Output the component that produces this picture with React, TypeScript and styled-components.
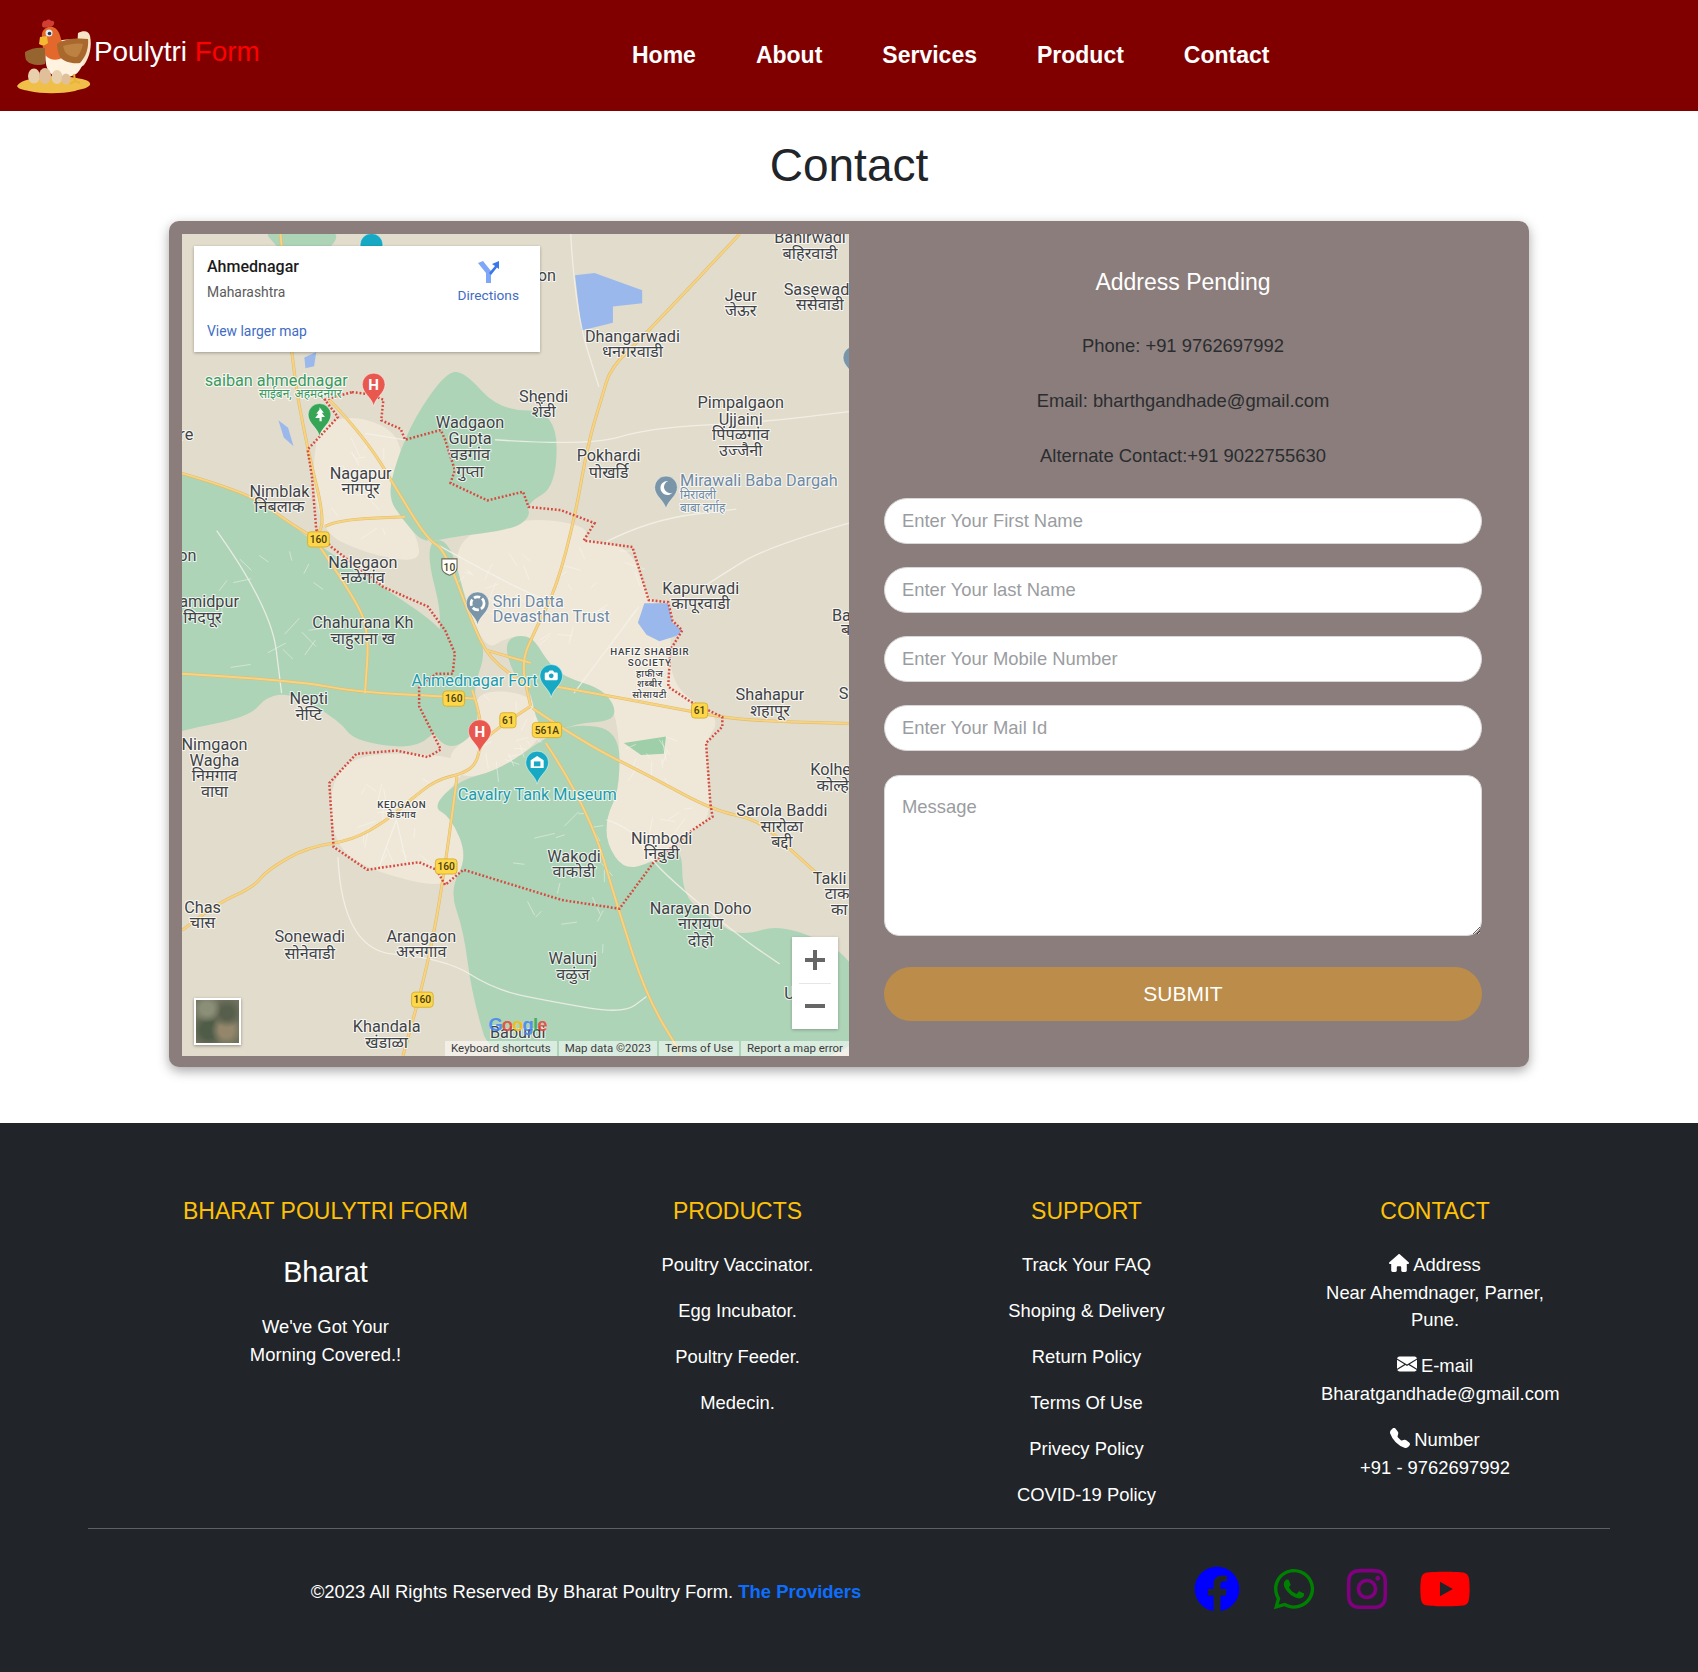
import React from "react";
import styled, { createGlobalStyle } from "styled-components";
import { FaFacebook, FaWhatsapp, FaInstagram, FaYoutube } from "react-icons/fa";
import { FaHouse } from "react-icons/fa6";
import { BsTelephoneFill, BsEnvelopeFill } from "react-icons/bs";

const Global = createGlobalStyle`
  html, body { margin: 0; padding: 0; background: #fff; }
  body { font-family: "Liberation Sans", Arial, sans-serif; color: #212529; }
  * { box-sizing: border-box; }
`;

const Page = styled.div`width: 1698px; height: 1672px; overflow: hidden;`;

const Header = styled.header`
  height: 110.5px; background: #800000; display: flex; align-items: center;
`;
const Brand = styled.div`
  width: 632px; display: flex; align-items: center; padding-left: 16px;
  font-size: 27.9px; color: #fff;
`;
const BrandAccent = styled.span`color: #ff0000;`;
const BrandText = styled.span`margin: 0 0 6px 0;`;
const Nav = styled.nav`display: flex; gap: 60px;`;
const NavLink = styled.a`font-size: 23px; font-weight: 700; color: #fff; line-height: 1;`;

const Title = styled.h1`
  margin: 26.5px 0 28px; text-align: center; font-size: 46px; font-weight: 400; line-height: 56px; color: #212529;
`;

const Card = styled.section`
  width: 1360px; height: 846px; margin: 0 0 56px 169px; padding: 13px 12px 11px 13px; display: flex;
  background: #8b7d7b; border-radius: 10px; box-shadow: 0 4px 12px rgba(0,0,0,.35);
`;
const MapFrame = styled.div`position: relative; width: 667px; height: 822px; flex: none; overflow: hidden; background: #e2dccc;`;
const MapSvg = styled.svg`display: block; width: 100%; height: 100%;`;

const mapFont = `font-family: Roboto, "Noto Sans", sans-serif;`;
const InfoCard = styled.div`
  ${mapFont} position: absolute; left: 12px; top: 12px; width: 346px; height: 106px; background: #fff;
  box-shadow: 0 1px 3px rgba(0,0,0,.3); padding: 11px 13px 12px; display: grid;
  grid-template-columns: 1fr auto; grid-template-rows: auto auto 1fr;
`;
const PlaceName = styled.div`font-size: 16px; font-weight: 500; color: #1c1c1c; line-height: 20px;`;
const PlaceRegion = styled.div`font-size: 13.9px; color: #5b5b5b; line-height: 20px; margin-top: 4px; grid-column: 1;`;
const LargerLink = styled.a`font-size: 13.9px; color: #3f6cc4; align-self: end; grid-column: 1 / 3; line-height: 18px;`;
const Directions = styled.div`
  grid-column: 2; grid-row: 1 / 3; font-size: 13.7px; color: #3f6cc4; text-align: center; padding: 3px 8px 0 0;
  display: flex; flex-direction: column; align-items: center; gap: 4px;
`;
const ZoomBox = styled.div`
  position: absolute; right: 11px; bottom: 27px; width: 46px; height: 92px; background: #fff;
  box-shadow: 0 1px 3px rgba(0,0,0,.25); display: grid; grid-template-rows: 1fr 1px 1fr; justify-items: center; align-items: center;
`;
const ZoomDivider = styled.div`width: 32px; height: 1px; background: #e6e6e6;`;
const Thumb = styled.div`
  position: absolute; left: 12px; bottom: 11px; width: 47px; height: 47px; border: 2px solid #fff;
  box-shadow: 0 1px 3px rgba(0,0,0,.35);
  background:
    radial-gradient(circle at 25% 20%, #8b8f78 0 12%, transparent 30%),
    radial-gradient(circle at 72% 30%, #575f4c 0 14%, transparent 34%),
    radial-gradient(circle at 70% 70%, #93866b 0 16%, transparent 36%),
    radial-gradient(circle at 30% 70%, #4f5c48 0 18%, transparent 40%),
    #6f715c;
`;
const Attribution = styled.div`
  ${mapFont} position: absolute; right: 0; bottom: 0; height: 15px; display: flex; gap: 2px; font-size: 11.5px; line-height: 15px; color: #3c3c3c;
`;
const AttrItem = styled.span`padding: 0 6px; background: rgba(255,255,255,.55); white-space: nowrap;`;

const FormCol = styled.div`flex: 1; padding: 34px 35px 0; text-align: center;`;
const FormHeading = styled.h3`margin: 0 0 36px; font-size: 23px; line-height: 28px; font-weight: 400; color: #fff;`;
const InfoLine = styled.p`margin: 0 0 27.6px; font-size: 18.4px; line-height: 27.6px; color: #2a2d30;`;
const baseField = `
  display: block; width: 598px; background: #fff; border: 1px solid #d8d8d8; outline: none; color: #212529;
  font-family: "Liberation Sans", Arial, sans-serif; font-size: 18.4px;
  &::placeholder { color: #9a9d9f; opacity: 1; }
`;
const Field = styled.input`${baseField} height: 46px; border-radius: 23px; padding: 0 17px; margin-bottom: 23.3px;`;
const Message = styled.textarea`${baseField} height: 161px; border-radius: 15px; padding: 20px 17px; margin-bottom: 31px;`;
const Submit = styled.button`
  display: block; width: 598px; height: 54px; border: 0; border-radius: 27px; background: #bc8c4a; color: #fff;
  font-family: "Liberation Sans", Arial, sans-serif; font-size: 21px; text-transform: uppercase;
`;

const Footer = styled.footer`background: #212529; height: 549px; padding: 74px 88px 0 88px; color: #fff;`;
const FooterGrid = styled.div`
  display: grid; grid-template-columns: 475px 349px 349px 348px; height: 332px; border-bottom: 1px solid rgba(255,255,255,.28);
  text-align: center;
`;
const FooterCol = styled.div`display: flex; flex-direction: column; align-items: center;`;
const FooterHead = styled.h5`margin: 0 0 26px; font-size: 23px; line-height: 28px; font-weight: 400; color: #ffc107; text-transform: uppercase;`;
const FooterBrand = styled.h4`margin: 4px 0 24px; font-size: 28.7px; line-height: 34px; font-weight: 400;`;
const FooterItem = styled.p`margin: 0 0 18.5px; font-size: 18.4px; line-height: 27.6px;`;
const ContactBlock = styled.div`width: 228px;`;
const ContactEmail = styled.div`white-space: nowrap; text-align: left;`;
const InlineIcon = styled.span`
  display: inline-block; vertical-align: -2px; margin-right: 4px;
  svg { display: block; width: 20px; height: 20px; }
`;
const BottomRow = styled.div`display: grid; grid-template-columns: 996px 1fr; height: 124px; align-items: center;`;
const Copy = styled.p`margin: 2px 0 0; text-align: center; font-size: 18.45px;`;
const CopyLink = styled.a`color: #0d6efd; font-weight: 700;`;
const Socials = styled.div`display: flex; align-items: center; padding-left: 110px; margin-bottom: 4px;`;
const Social = styled.span<{ $c: string; $h: number; $gap: number }>`
  display: flex; color: ${p => p.$c}; margin-right: ${p => p.$gap}px;
  svg { display: block; height: ${p => p.$h}px; width: auto; }
`;

/* Map drawing */
const round1 = (n: number) => Math.round(n * 10) / 10;
const mid = (a: number[], b: number[]) => `${round1((a[0] + b[0]) / 2)} ${round1((a[1] + b[1]) / 2)}`;
const closedCurve = (a: number[][]) => {
  let d = `M${mid(a[a.length - 1], a[0])}`;
  a.forEach((p, i) => { d += `Q${p[0]} ${p[1]} ${mid(p, a[(i + 1) % a.length])}`; });
  return d + "Z";
};
const openCurve = (a: number[][]) => {
  let d = `M${a[0][0]} ${a[0][1]}`;
  for (let i = 1; i < a.length - 1; i++) d += `Q${a[i][0]} ${a[i][1]} ${mid(a[i], a[i + 1])}`;
  const l = a[a.length - 1];
  return d + `L${l[0]} ${l[1]}`;
};
const poly = (a: number[][]) => "M" + a.map(p => p.join(" ")).join("L");
const toPts = (a: number[][]) => a.map(p => p.join(",")).join(" ");

const greens: number[][][] = [
  [[120,420],[168,437],[230,455],[271,486],[292,502],[354,542],[412,582],[420,610],[403,692],[329,686],[313,665],[270,640],[246,643],[230,662],[168,674],[120,690]],
  [[411,345],[428,342],[461,379],[514,379],[514,449],[486,465],[490,477],[473,489],[415,496],[391,502],[372,480],[358,459],[366,425],[383,385]],
  [[391,502],[415,496],[432,563],[450,600],[436,637],[444,674],[411,696],[387,652],[387,620],[412,582]],
  [[424,720],[461,711],[505,680],[530,668],[572,674],[572,729],[560,754],[560,779],[576,803],[601,797],[630,779],[630,828],[660,850],[683,865],[725,852],[800,890],[800,990],[457,990],[436,920],[428,859],[415,822],[432,791],[416,754],[399,745]],
  [[465,590],[490,585],[505,610],[520,625],[560,637],[572,665],[530,668],[505,680],[494,662],[490,637],[473,622]],
  [[240,210],[320,210],[295,240],[275,250],[258,230]],
];
const urbans: number[][][] = [
  [[288,394],[329,382],[374,403],[366,462],[387,499],[387,520],[337,511],[292,489]],
  [[415,496],[490,477],[543,486],[539,499],[584,505],[597,554],[621,566],[617,634],[667,662],[650,686],[658,754],[638,769],[601,797],[576,803],[560,779],[560,754],[572,729],[572,674],[560,637],[520,625],[505,610],[490,585],[465,590],[450,600],[432,563]],
  [[304,723],[329,696],[403,696],[432,705],[424,720],[399,745],[416,754],[432,791],[415,822],[339,803],[308,779]],
  [[436,637],[494,640],[505,680],[461,711],[424,720],[411,696],[444,674]],
];
const waters: number[][][] = [
  [[531,254],[549,252],[593,268],[593,280],[566,283],[566,298],[537,305]],
  [[595,557],[617,557],[621,575],[630,582],[625,587],[609,592],[597,586],[589,575]],
  [[257,388],[266,395],[271,412],[262,404]],
  [[281,330],[292,325],[290,338],[282,340]],
];
const yellowRoads: number[][][] = [
  [[683,216],[597,308],[564,339],[556,366],[543,409],[531,477],[514,542],[494,582],[481,612],[490,652]],
  [[259,216],[269,335],[284,415],[300,480],[292,496]],
  [[304,369],[337,403],[374,465],[395,498],[411,508],[436,575],[452,609],[490,635]],
  [[168,437],[230,455],[263,480],[292,498]],
  [[300,486],[312,480],[374,477]],
  [[292,500],[325,548],[341,582],[337,640]],
  [[168,622],[271,628],[329,639],[411,643],[438,645]],
  [[490,652],[461,671],[444,686],[440,705],[428,714],[403,720],[378,739],[358,757],[325,776],[284,782],[247,803],[234,819],[201,834],[168,859]],
  [[514,634],[560,642],[634,656],[683,665],[784,668]],
  [[492,654],[539,686],[601,717],[658,748],[700,757],[724,779],[757,809]],
  [[504,686],[543,745],[572,843],[597,920],[630,975]],
  [[422,717],[411,803],[395,892],[372,975]],
  [[448,600],[490,612]],
  [[436,637],[445,665],[443,690]],
];
const whiteRoads: number[][][] = [
  [[337,400],[374,406]],
  [[457,406],[543,412],[600,395],[700,390],[784,380]],
  [[527,216],[531,286],[553,357]],
  [[312,791],[316,877],[411,885],[457,914],[510,925],[576,936],[597,920]],
  [[560,757],[585,765],[601,797],[683,865],[720,890]],
  [[366,757],[350,800]],[[366,757],[375,795]],
  [[784,483],[708,505],[663,533],[640,548]],
  [[395,498],[470,540],[520,560]],
  [[530,640],[590,560]],
  [[200,490],[250,560],[260,640]],
  [[560,500],[600,480],[680,470]],
];
const boundary: number[][] = [
  [325,362],[341,364],[354,369],[352,388],[370,396],[374,406],[407,397],[411,406],[420,434],[416,446],[450,462],[483,454],[488,468],[518,471],[549,483],[539,499],[584,505],[599,554],[617,556],[621,573],[630,582],[619,600],[617,634],[638,648],[667,662],[667,671],[652,686],[656,742],[658,754],[640,766],[603,797],[572,839],[519,831],[428,803],[411,817],[403,803],[387,796],[339,803],[308,782],[304,723],[329,696],[366,693],[395,699],[407,692],[387,652],[387,634],[403,622],[418,622],[420,603],[411,582],[395,560],[354,542],[306,505],[292,489],[288,440],[284,415],[312,385],[300,369],[325,362]
];

/* fine street texture inside the built-up areas */
const streetBoxes = [[300,400,60,95],[505,500,85,90],[445,640,50,65],[335,715,65,75],[585,680,60,80],[425,510,80,60],[470,745,90,130],[200,500,120,130]];
const streets: string[] = [];
let seed = 17;
const rnd = () => { seed = (seed * 9301 + 49297) % 233280; return seed / 233280; };
streetBoxes.forEach(([x, y, w, h]) => {
  for (let i = 0; i < 16; i++) {
    const sx = x + rnd() * w, sy = y + rnd() * h;
    const len = 6 + rnd() * 14, ang = rnd() * Math.PI;
    streets.push(`M${round1(sx)} ${round1(sy)}l${round1(Math.cos(ang) * len)} ${round1(Math.sin(ang) * len)}`);
  }
});

type L = [number, number, string];
const dark: L[] = [
  [748,224,"Bahirwadi"],[748,239,"बहिरवाडी"],[754,272,"Sasewad"],[757,286,"ससेवाडी"],[684,278,"Jeur"],[684,292,"जेऊर"],
  [505,259,"on"],[584,316,"Dhangarwadi"],[584,330,"धनगरवाडी"],[502,371,"Shendi"],[502,385,"शेंडी"],
  [434,395,"Wadgaon"],[434,410,"Gupta"],[434,425,"वडगांव"],[434,440,"गुप्ता"],
  [684,377,"Pimpalgaon"],[684,392,"Ujjaini"],[684,406,"पिंपळगांव"],[684,421,"उज्जैनी"],
  [562,426,"Pokhardi"],[562,441,"पोखर्डि"],[172,406,"re"],[333,442,"Nagapur"],[333,456,"नागपूर"],
  [258,459,"Nimblak"],[258,473,"निंबलाक"],[173,518,"on"],[335,524,"Nalegaon"],[335,538,"नळेगांव"],
  [647,548,"Kapurwadi"],[647,562,"कापूरवाडी"],[193,560,"amidpur"],[187,575,"मिदपूर"],
  [335,580,"Chahurana Kh"],[335,595,"चाहुराना ख"],[777,573,"Ba"],[781,586,"ब"],
  [285,650,"Nepti"],[285,665,"नेप्टि"],[711,646,"Shahapur"],[711,661,"शहापूर"],[779,645,"S"],
  [198,692,"Nimgaon"],[198,707,"Wagha"],[198,721,"निमगाव"],[198,736,"वाघा"],
  [767,716,"Kolhe"],[769,730,"कोल्हे"],[722,753,"Sarola Baddi"],[722,768,"सारोळा"],[722,782,"बद्दी"],
  [611,779,"Nimbodi"],[611,793,"निंबुडी"],[530,796,"Wakodi"],[530,810,"वाकोडी"],
  [766,816,"Takli"],[773,830,"टाक"],[775,845,"का"],[647,844,"Narayan Doho"],[647,858,"नारायण"],[647,873,"दोहो"],
  [187,843,"Chas"],[187,857,"चास"],[286,870,"Sonewadi"],[286,885,"सोनेवाडी"],[389,870,"Arangaon"],[389,884,"अरनगाव"],
  [529,890,"Walunj"],[529,905,"वळुंज"],[357,953,"Khandala"],[357,968,"खंडाळा"],[478,958,"Baburdi"],[729,922,"U"],
];
const small: L[] = [
  [600,605,"HAFIZ SHABBIR"],[600,615,"SOCIETY"],[600,625,"हाफीज"],[600,634,"शब्बीर"],[600,644,"सोसायटी"],
  [371,746,"KEDGAON"],[371,755,"केडगाव"],
];
const shields: [number, number, string, number?][] = [
  [294,498,"160"],[419,645,"160"],[412,800,"160"],[390,923,"160"],[469,665,"61",15],[646,656,"61",15],[505,674,"561A",27],
];

const MapText = styled.text<{ $c?: string; $s?: number; $w?: number }>`
  font-family: Roboto, "Noto Sans", "DejaVu Sans", sans-serif;
  font-size: ${p => p.$s ?? 15}px;
  font-weight: ${p => p.$w ?? 400};
  fill: ${p => p.$c ?? "#3f4345"};
  stroke: rgba(255,255,255,.75); stroke-width: 2px; paint-order: stroke; stroke-linejoin: round;
`;
const GoogleMark = styled.text`
  font-family: "Liberation Sans", sans-serif; font-size: 17px; font-weight: 700; letter-spacing: -.8px; opacity: .85;
`;
const ShieldText = styled.text`
  font-family: Roboto, sans-serif; font-size: 9.5px; font-weight: 500; fill: #4a3f10; text-anchor: middle;
`;
const PinText = styled.text`
  font-family: Roboto, sans-serif; font-size: 14px; font-weight: 700; fill: #fff; text-anchor: middle;
`;

const Pin = ({ x, y, c, children }: { x: number; y: number; c: string; children?: React.ReactNode }) => (
  <g transform={`translate(${x} ${y})`}>
    <path d="M0 20C-1.500 12-10.500 8-10.500 0A10.500 10.500 0 0 1 10.500 0C10.500 8 1.500 12 0 20Z" fill={c} stroke="rgba(255,255,255,.6)" strokeWidth=".7" />
    {children}
  </g>
);

const MapDrawing = () => (
  <MapSvg viewBox="168 216 616 759" preserveAspectRatio="none">
    <rect x="168" y="216" width="616" height="759" fill="#e2dccc" />
    {urbans.map((p, i) => <path key={i} d={closedCurve(p)} fill="#efe8d9" />)}
    {greens.map((p, i) => <path key={i} d={closedCurve(p)} fill="#aed4b8" />)}
    <polygon points="576,686 615,680 613,696 592,697" fill="#9fcfa9" />
    {waters.map((p, i) => <polygon key={i} points={toPts(p)} fill="#9bb8ec" />)}
    {streets.map((d, i) => <path key={i} d={d} fill="none" stroke="#fbf9f2" strokeWidth=".6" opacity=".7" />)}
    {whiteRoads.map((p, i) => <path key={i} d={openCurve(p)} fill="none" stroke="#f5f3ea" strokeWidth="1.200" opacity=".8" />)}
    {yellowRoads.map((p, i) => <path key={i} d={openCurve(p)} fill="none" stroke="#e0bd6d" strokeWidth="2.800" />)}
    {yellowRoads.map((p, i) => <path key={i} d={openCurve(p)} fill="none" stroke="#f8d482" strokeWidth="1.800" />)}
    <path d={poly(boundary)} fill="none" stroke="#d6493f" strokeWidth="2.300" strokeDasharray="1.700 1.800" />
    {shields.map(([x, y, t, w]) => (
      <g key={x + t}>
        <rect x={x - (w ?? 20) / 2} y={y - 7} width={w ?? 20} height={14} rx="3" fill="#fdd64a" stroke="#d5ae2d" strokeWidth=".8" />
        <ShieldText x={x} y={y + 3.500}>{t}</ShieldText>
      </g>
    ))}
    <path d="M408 516h14v8q0 5-7 7q-7-2-7-7z" fill="#fff" stroke="#6a6a55" strokeWidth="1" />
    <ShieldText x={415} y={527}>10</ShieldText>
    {dark.map(([x, y, t]) => <MapText key={x + t + y} x={x} y={y} textAnchor="middle">{t}</MapText>)}
    {small.map(([x, y, t]) => <MapText key={x + t + y} x={x} y={y} textAnchor="middle" $s={9} $w={500} letterSpacing=".6">{t}</MapText>)}
    <MapText x={189} y={356} $c="#3a9a5f">saiban ahmednagar</MapText>
    <MapText x={239} y={367} $c="#3a9a5f" $s={11}>साईबन, अहमदनगर</MapText>
    <MapText x={628} y={449} $c="#6f8aa3">Mirawali Baba Dargah</MapText>
    <MapText x={628} y={461} $c="#6f8aa3" $s={11}>मिरावली</MapText>
    <MapText x={628} y={473} $c="#6f8aa3" $s={11}>बाबा दर्गाह</MapText>
    <MapText x={455} y={560} $c="#6f8aa3">Shri Datta</MapText>
    <MapText x={455} y={574} $c="#6f8aa3">Devasthan Trust</MapText>
    <MapText x={380} y={633} $c="#1d9bab">Ahmednagar Fort</MapText>
    <MapText x={496} y={739} textAnchor="middle" $c="#1d9bab">Cavalry Tank Museum</MapText>
    <Pin x={343} y={226} c="#17a9c3" />
    <Pin x={345} y={355} c="#e8584f"><PinText y={5}>H</PinText></Pin>
    <Pin x={443} y={675} c="#e8584f"><PinText y={5}>H</PinText></Pin>
    <Pin x={295} y={383} c="#36a656"><path d="M0-7l4 5h-2l3 4h-3v1l4 0h-4v3h-2v-3h-4l3-4h-2l3-4z" fill="#fff" /></Pin>
    <Pin x={509} y={624} c="#17a9c3"><path d="M-5-3h2l1.500-2h3L3-3h2q1 0 1 1v5q0 1-1 1h-10q-1 0-1-1v-5q0-1 1-1z" fill="#fff" /><circle r="2.200" fill="#17a9c3" /></Pin>
    <Pin x={496} y={704} c="#17a9c3"><path d="M-6-2L0-6L6-2V5H-6Z" fill="#fff" /><path d="M-3-1h6v4.500h-6z" fill="#17a9c3" /></Pin>
    <Pin x={615} y={450} c="#7a95a8"><path d="M2-6a6.500 6.500 0 1 0 4 11a5.500 5.500 0 1 1-4-11z" fill="#fff" /></Pin>
    <Pin x={441} y={557} c="#7a95a8"><circle r="6" fill="none" stroke="#fff" strokeWidth="2.500" strokeDasharray="6 2" /></Pin>
    <Pin x={789} y={330} c="#7a95a8" />
    <GoogleMark x={451} y={952}>
      <tspan fill="#4285f4">G</tspan><tspan fill="#ea4335">o</tspan><tspan fill="#fbbc05">o</tspan><tspan fill="#4285f4">g</tspan><tspan fill="#34a853">l</tspan><tspan fill="#ea4335">e</tspan>
    </GoogleMark>
  </MapSvg>
);

const DirIcon = () => (
  <svg width="23" height="23" viewBox="0 0 23 23">
    <path d="M1 3L6 1L14 11V23H9V13Z" fill="#7fa7f5" />
    <path d="M12 13L18 6L15 4L22 1V9L20 7.500L14 15Z" fill="#3b78e7" />
  </svg>
);

const ChickenLogo = () => (
  <svg width="78" height="78" viewBox="16 16 78 78">
    <path d="M17 86c3-5 12-7 19-8 16-3 34-2 46 1 5 1 9 3 8 6-3 4-10 4-15 6-14 3-33 3-46 0-5-1-11-2-12-5z" fill="#f0bf4a" />
    <path d="M78 33c6-3 11-2 12 3 2 9 0 21-6 29-3 3-6 2-8-1z" fill="#f7e4c6" />
    <path d="M46 50c4-8 20-14 34-8 6 6 6 24-4 32-10 6-24 4-28-4-3-6-3-14-2-20z" fill="#fff3df" />
    <path d="M42 36c-1-6 6-12 13-8 6 4 5 12 9 18v10c-6 6-14 4-18 0-3-5-4-12-4-20z" fill="#e4672b" />
    <path d="M42 25c0-3 2-5 4-4 1-2 4-2 5 0 2-1 4 1 3 3-1 3-4 3-6 3-3 1-6 1-6-2z" fill="#cf3d33" />
    <path d="M57 44c8-6 22-6 31-5 1 8-2 18-8 24-8 1-16-1-20-6-2-4-3-9-3-13z" fill="#a9682c" />
    <path d="M63 46c6-2 14-3 20-2-1 5-3 10-6 13-5 0-10-2-12-5z" fill="#bd8142" />
    <path d="M25 52c6-4 14-5 20-4l0 16c-7 2-15 1-19-4-1-3-1-6-1-8z" fill="#96642f" />
    <path d="M40 37l-1 7c3 2 6 2 9-1l-1-7z" fill="#f3b931" />
    <circle cx="49" cy="33" r="3.500" fill="#dfeaf2" /><circle cx="49.500" cy="33.500" r="1.800" fill="#334" />
    <path d="M74 74l1 7m0 0l-5 3m5-3l5 2" stroke="#e6b53c" strokeWidth="2" fill="none" />
    <ellipse cx="34" cy="76" rx="6" ry="7.500" fill="#e9d0ad" /><ellipse cx="45" cy="76" rx="6" ry="8" fill="#dfc09a" />
    <ellipse cx="57" cy="77" rx="5.500" ry="7" fill="#e9d0ad" /><ellipse cx="66" cy="79" rx="4.500" ry="5.500" fill="#dfc09a" />
  </svg>
);

export default function App() {
  return (
    <Page>
      <Global />
      <Header>
        <Brand>
          <ChickenLogo />
          <BrandText>Poulytri <BrandAccent>Form</BrandAccent></BrandText>
        </Brand>
        <Nav>
          {["Home", "About", "Services", "Product", "Contact"].map(n => <NavLink key={n}>{n}</NavLink>)}
        </Nav>
      </Header>
      <Title>Contact</Title>
      <Card>
        <MapFrame>
          <MapDrawing />
          <InfoCard>
            <PlaceName>Ahmednagar</PlaceName>
            <Directions><DirIcon />Directions</Directions>
            <PlaceRegion>Maharashtra</PlaceRegion>
            <LargerLink>View larger map</LargerLink>
          </InfoCard>
          <Thumb />
          <ZoomBox>
            <svg width="20" height="20" viewBox="0 0 20 20"><path d="M8 0h4v8h8v4h-8v8H8v-8H0V8h8z" fill="#666" /></svg>
            <ZoomDivider />
            <svg width="20" height="20" viewBox="0 0 20 20"><path d="M0 8h20v4H0z" fill="#666" /></svg>
          </ZoomBox>
          <Attribution>
            <AttrItem>Keyboard shortcuts</AttrItem>
            <AttrItem>Map data ©2023</AttrItem>
            <AttrItem>Terms of Use</AttrItem>
            <AttrItem>Report a map error</AttrItem>
          </Attribution>
        </MapFrame>
        <FormCol>
          <FormHeading>Address Pending</FormHeading>
          <InfoLine>Phone: +91 9762697992</InfoLine>
          <InfoLine>Email: bharthgandhade@gmail.com</InfoLine>
          <InfoLine>Alternate Contact:+91 9022755630</InfoLine>
          <Field placeholder="Enter Your First Name" />
          <Field placeholder="Enter Your last Name" />
          <Field placeholder="Enter Your Mobile Number" />
          <Field placeholder="Enter Your Mail Id" />
          <Message placeholder="Message" />
          <Submit>Submit</Submit>
        </FormCol>
      </Card>
      <Footer>
        <FooterGrid>
          <FooterCol>
            <FooterHead>Bharat Poulytri Form</FooterHead>
            <FooterBrand>Bharat</FooterBrand>
            <FooterItem>We've Got Your<br />Morning Covered.!</FooterItem>
          </FooterCol>
          <FooterCol>
            <FooterHead>Products</FooterHead>
            {["Poultry Vaccinator.", "Egg Incubator.", "Poultry Feeder.", "Medecin."].map(t => <FooterItem key={t}>{t}</FooterItem>)}
          </FooterCol>
          <FooterCol>
            <FooterHead>Support</FooterHead>
            {["Track Your FAQ", "Shoping & Delivery", "Return Policy", "Terms Of Use", "Privecy Policy", "COVID-19 Policy"].map(t => <FooterItem key={t}>{t}</FooterItem>)}
          </FooterCol>
          <FooterCol>
            <FooterHead>Contact</FooterHead>
            <ContactBlock>
              <FooterItem><InlineIcon><FaHouse /></InlineIcon>Address<br />Near Ahemdnager, Parner, Pune.</FooterItem>
              <FooterItem><InlineIcon><BsEnvelopeFill /></InlineIcon>E-mail<ContactEmail>Bharatgandhade@gmail.com</ContactEmail></FooterItem>
              <FooterItem><InlineIcon><BsTelephoneFill /></InlineIcon>Number<br />+91 - 9762697992</FooterItem>
            </ContactBlock>
          </FooterCol>
        </FooterGrid>
        <BottomRow>
          <Copy>©2023 All Rights Reserved By Bharat Poultry Form. <CopyLink>The Providers</CopyLink></Copy>
          <Socials>
            <Social $c="#0000ff" $h={46} $gap={31}><FaFacebook /></Social>
            <Social $c="#008000" $h={46} $gap={27}><FaWhatsapp /></Social>
            <Social $c="#800080" $h={46} $gap={29}><FaInstagram /></Social>
            <Social $c="#ff0000" $h={52} $gap={0}><FaYoutube /></Social>
          </Socials>
        </BottomRow>
      </Footer>
    </Page>
  );
}
